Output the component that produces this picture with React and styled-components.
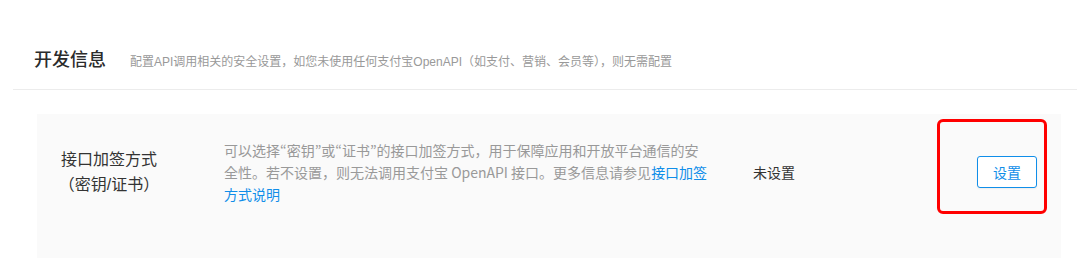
import styled, { createGlobalStyle } from "styled-components"

const GlobalStyle = createGlobalStyle`
  html, body {
    margin: 0;
    padding: 0;
    background: #fff;
  }
  body {
    font-family: "Liberation Sans", "Noto Sans CJK SC", sans-serif;
    color: #333;
  }
`

const Page = styled.div`
  padding-left: 13px;
`

const Header = styled.div`
  display: flex;
  align-items: baseline;
  padding: 46px 21px 15px;
  border-bottom: 1px solid #ececec;
`

const Title = styled.h2`
  margin: 0;
  font-size: 18px;
  line-height: 28px;
  font-weight: 500;
  color: #2b2b2b;
`

const Subtitle = styled.span`
  margin-left: 24px;
  font-size: 12px;
  color: #999;
`

const Card = styled.div`
  margin: 24px 16px 0 24px;
  background: #fafafa;
  padding: 25px 24px 60px 0;
`

const Row = styled.div`
  display: flex;
  align-items: center;
`

const Label = styled.div`
  width: 144px;
  flex-shrink: 0;
  text-align: center;
  font-size: 16px;
  line-height: 25px;
  color: #333;
`

const Desc = styled.div`
  width: 488px;
  margin-left: 43px;
  flex-shrink: 0;
  font-family: "Noto Sans CJK JP", "Noto Sans CJK SC", sans-serif;
  font-size: 14px;
  line-height: 22px;
  color: #999;
`

const Link = styled.a`
  color: #108ee9;
  text-decoration: none;
`

const Status = styled.div`
  flex: 1;
  margin-left: 41px;
  font-size: 14px;
  color: #333;
`

const Action = styled.div`
  position: relative;
  display: flex;
`

const Button = styled.button`
  width: 60px;
  height: 32px;
  padding: 0;
  border: 1px solid #108ee9;
  border-radius: 3px;
  background: #fff;
  color: #108ee9;
  font-family: inherit;
  font-size: 14px;
  box-shadow: 0 1px 2px rgba(0, 0, 0, 0.06);
  cursor: pointer;
`

const Highlight = styled.div`
  position: absolute;
  top: -37px;
  bottom: -26px;
  left: -40px;
  right: -10px;
  border: 3px solid #ff0000;
  border-radius: 6px;
  pointer-events: none;
`

const App = () => {
  return (
    <Page>
      <GlobalStyle />
      <Header>
        <Title>开发信息</Title>
        <Subtitle>配置API调用相关的安全设置，如您未使用任何支付宝OpenAPI（如支付、营销、会员等），则无需配置</Subtitle>
      </Header>
      <Card>
        <Row>
          <Label>
            接口加签方式
            <br />
            （密钥/证书）
          </Label>
          <Desc>
            可以选择“密钥”或“证书”的接口加签方式，用于保障应用和开放平台通信的安全性。若不设置，则无法调用支付宝 OpenAPI 接口。更多信息请参见<Link href="#">接口加签方式说明</Link>
          </Desc>
          <Status>未设置</Status>
          <Action>
            <Button>设置</Button>
            <Highlight />
          </Action>
        </Row>
      </Card>
    </Page>
  )
}

export default App
